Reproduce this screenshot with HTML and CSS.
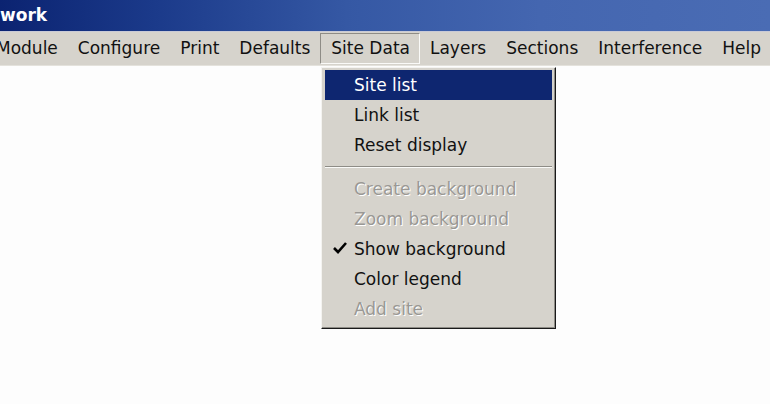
FILE: index.html
```html
<!DOCTYPE html>
<html>
<head>
<meta charset="utf-8">
<link rel="stylesheet" href="styles.css">
</head>
<body>
<div class="window">
  <div class="titlebar"><span class="title">work</span></div>
  <div class="menubar">
    <span class="menu first">Module</span>
    <span class="menu">Configure</span>
    <span class="menu">Print</span>
    <span class="menu">Defaults</span>
    <span class="menu open">Site Data</span>
    <span class="menu">Layers</span>
    <span class="menu">Sections</span>
    <span class="menu">Interference</span>
    <span class="menu">Help</span>
  </div>
  <div class="client">
    <div class="dropdown">
      <div class="item selected">Site list</div>
      <div class="item">Link list</div>
      <div class="item">Reset display</div>
      <div class="sep"></div>
      <div class="item disabled">Create background</div>
      <div class="item disabled">Zoom background</div>
      <div class="item"><span class="check"><svg width="14" height="12" viewBox="0 0 14 12"><path d="M1 6 L5 10 L13 1" fill="none" stroke="#000" stroke-width="2.6"/></svg></span>Show background</div>
      <div class="item">Color legend</div>
      <div class="item disabled">Add site</div>
    </div>
  </div>
</div>
</body>
</html>
```
FILE: styles.css
```css
html, body {
  margin: 0;
  padding: 0;
  background: #fdfdfd;
  overflow: hidden;
}
.window {
  width: 770px;
  height: 404px;
  display: flex;
  flex-direction: column;
  font-family: "DejaVu Sans", sans-serif;
}
.titlebar {
  height: 31px;
  background: linear-gradient(to right, #0b2371 0%, #1b3a8a 20%, #3558a4 45%, #4466b0 70%, #4a6cb4 100%);
  display: flex;
  align-items: center;
  border-bottom: 1px solid #c9cad6;
}
.title {
  color: #fff;
  font-weight: bold;
  font-size: 17px;
  margin-left: 0;
  margin-top: -1px;
}
.menubar {
  height: 33px;
  background: #d6d3cc;
  display: flex;
  align-items: center;
  font-size: 17px;
  color: #111;
  border-bottom: 1px solid #e4e2dc;
  overflow: hidden;
}
.menu {
  padding: 0 10px;
  height: 31px;
  line-height: 31px;
  box-sizing: border-box;
  white-space: nowrap;
  flex: none;
}
.menu.first {
  margin-left: -14px;
}
.menu.open {
  border: 1px solid;
  border-color: #8e8c86 #fafaf8 #fafaf8 #8e8c86;
  padding: 0 9px 0 10px;
  line-height: 29px;
}
.client {
  flex: 1;
  position: relative;
  background: #fdfdfd;
}
.dropdown {
  position: absolute;
  left: 321px;
  top: 1px;
  width: 235px;
  box-sizing: border-box;
  background: #d6d3cc;
  border: 1px solid;
  border-color: #f4f3f0 #1a1a1a #1a1a1a #f4f3f0;
  box-shadow: inset -1px -1px 0 #8e8c86;
  padding: 2px 3px 4px 3px;
  font-size: 17px;
  color: #111;
}
.item {
  height: 30px;
  line-height: 30px;
  padding-left: 29px;
  position: relative;
  white-space: nowrap;
}
.item.selected {
  background: #0e2670;
  color: #fff;
}
.item.disabled {
  color: #9a9894;
  text-shadow: 1px 1px 0 #ffffff;
}
.check {
  position: absolute;
  left: 8px;
  top: 8px;
  line-height: 0;
}
.sep {
  height: 14px;
  display: flex;
  flex-direction: column;
  justify-content: center;
}
.sep::before {
  content: "";
  display: block;
  height: 1px;
  background: #8e8c86;
}
.sep::after {
  content: "";
  display: block;
  height: 1px;
  background: #fafaf8;
}
```
